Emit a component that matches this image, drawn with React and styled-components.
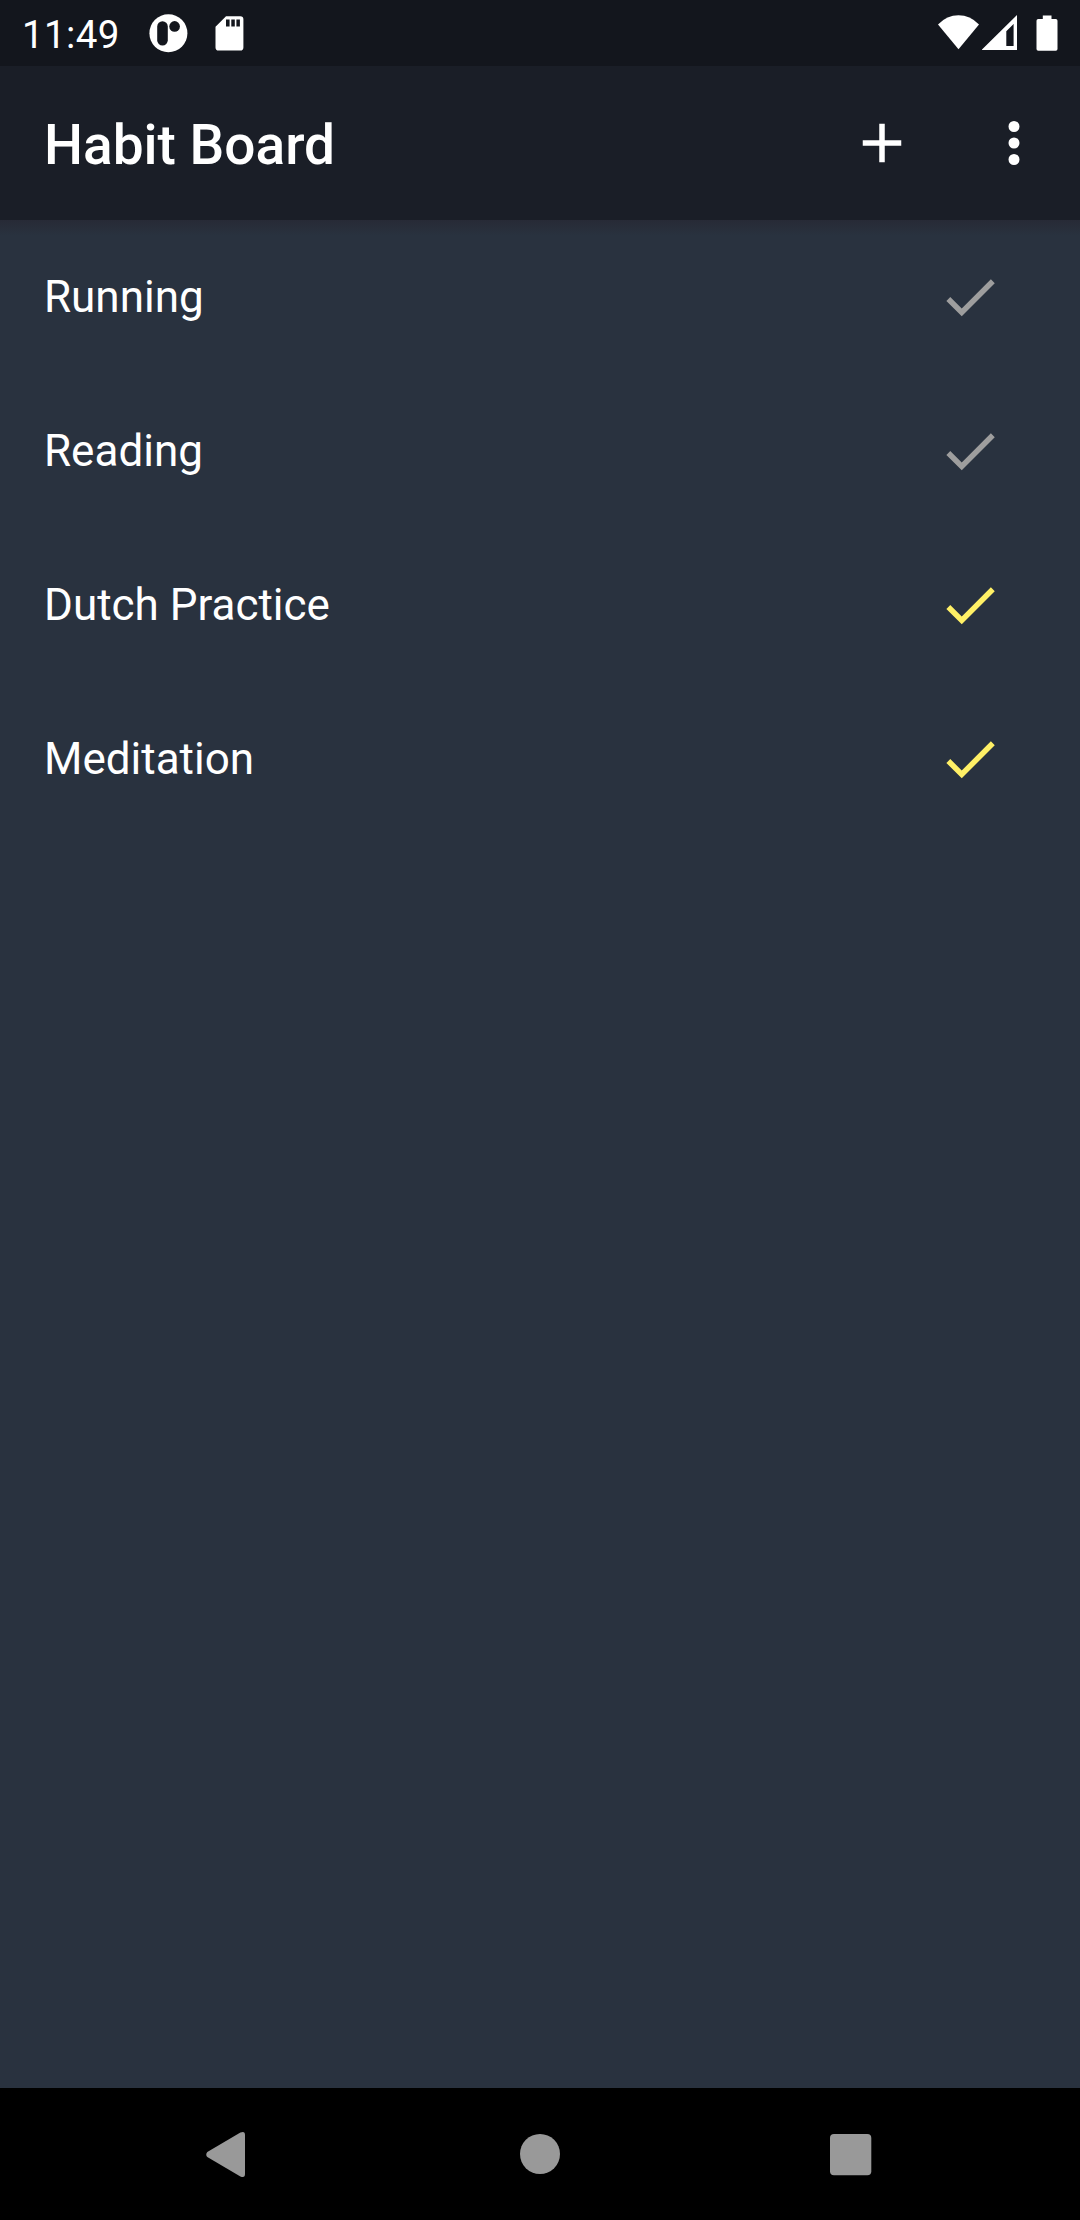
import React from "react";
import styled, { createGlobalStyle } from "styled-components";

const GlobalStyle = createGlobalStyle`
  * { box-sizing: border-box; }
  body { margin: 0; background: #29323f; }
  svg { display: block; flex: none; }
`;

const Screen = styled.div`
  display: flex;
  flex-direction: column;
  width: 1080px;
  height: 2220px;
  overflow: hidden;
  background: #29323f;
  color: #fff;
  font-family: Roboto, "Liberation Sans", sans-serif;
`;

const StatusBar = styled.header`
  display: flex;
  justify-content: space-between;
  flex: none;
  height: 66px;
  padding: 0 22px;
  background: #13161d;
`;

const StatusGroup = styled.div`
  display: flex;
  align-items: center;
  gap: ${(p) => p.$gap}px;
`;

const Clock = styled.time`
  width: 102px;
  padding-top: 4px;
  font-size: 38.5px;
  letter-spacing: 0.4px;
  line-height: 46px;
  white-space: nowrap;
`;

const AppBar = styled.div`
  display: flex;
  align-items: center;
  flex: none;
  height: 154px;
  padding: 0 33px 0 44px;
  background: #1a1e27;
`;

const Title = styled.h1`
  flex: 1;
  margin: 0;
  padding-top: 4px;
  font-size: 55px;
  font-weight: 500;
  line-height: 66px;
`;

const Actions = styled.div`
  display: flex;
  gap: 66px;
`;

const IconButton = styled.button`
  width: 66px;
  height: 66px;
  padding: 0;
  border: 0;
  background: none;
  color: ${(p) => p.$color || "#fff"};
`;

const Shade = styled.div`
  flex: none;
  height: 16px;
  margin-bottom: -16px;
  background: linear-gradient(#272a36, #29323f);
`;

const HabitList = styled.ul`
  flex: 1;
  margin: 0;
  padding: 0;
  list-style: none;
`;

const HabitRow = styled.li`
  display: flex;
  align-items: center;
  justify-content: space-between;
  height: 154px;
  padding: 0 77px 0 44px;
`;

const HabitName = styled.span`
  font-size: 44px;
  line-height: 52px;
`;

const NavBar = styled.nav`
  display: flex;
  align-items: center;
  justify-content: center;
  gap: 245px;
  flex: none;
  height: 132px;
  background: #000;
`;

const NavButton = styled.button`
  width: 66px;
  height: 66px;
  padding: 0;
  border: 0;
  background: none;
  color: #999;
`;

const MaterialIcon = ({ d }) => (
  <svg width="66" height="66" viewBox="0 0 24 24" fill="currentColor">
    <path d={d} />
  </svg>
);

const PLUS = "M19 13h-6v6h-2v-6H5v-2h6V5h2v6h6z";
const MORE =
  "M12 8a2 2 0 1 0 0-4 2 2 0 0 0 0 4zm0 2a2 2 0 1 0 0 4 2 2 0 0 0 0-4zm0 6a2 2 0 1 0 0 4 2 2 0 0 0 0-4z";
const CHECK = "M9 16.17L4.83 12l-1.42 1.41L9 19 21 7l-1.41-1.41z";

const AppBadge = () => (
  <svg width="44" height="66" viewBox="146 0 44 66">
    <circle cx="168.4" cy="33.2" r="19" fill="#fff" />
    <rect x="157.2" y="21.2" width="10.6" height="24.3" rx="5.3" fill="#13161d" />
    <circle cx="174.6" cy="26.4" r="5.3" fill="#13161d" />
  </svg>
);

const SdCard = () => (
  <svg width="34" height="66" viewBox="212 0 34 66">
    <path
      fill="#fff"
      fillRule="evenodd"
      d="M226 16.2H240.3Q243.4 16.2 243.4 19.3V47.5Q243.4 50.6 240.3 50.6H218.6Q215.5 50.6 215.5 47.5V26.7ZM226 19.6V26.6H229.6V19.6ZM231.3 19.6V26.6H234.8V19.6ZM236.4 19.6V26.6H239.9V19.6Z"
    />
  </svg>
);

const Wifi = () => (
  <svg width="42" height="66" viewBox="938 0 42 66">
    <path fill="#fff" d="M958.5 49.3L938 24.4Q947 15.3 958.5 15.3T979 24.4Z" />
  </svg>
);

const Signal = () => (
  <svg width="36" height="66" viewBox="982 0 36 66">
    <path
      fill="#fff"
      fillRule="evenodd"
      d="M982 50V49.6L1017 15V50ZM1006.3 31.2V46H1013.6V24Z"
    />
  </svg>
);

const Battery = () => (
  <svg width="22" height="66" viewBox="1036.5 0 22 66">
    <path
      fill="#fff"
      d="M1043.3 15.4H1052V19H1056.3Q1058 19 1058 20.8V48.9Q1058 50.7 1056.3 50.7H1038.8Q1037 50.7 1037 48.9V20.8Q1037 19 1038.8 19H1043.3Z"
    />
  </svg>
);

const SystemIcons = styled(StatusGroup)`
  & > :last-child { margin-left: 16.5px; }
`;

const habits = [
  { name: "Running", done: false },
  { name: "Reading", done: false },
  { name: "Dutch Practice", done: true },
  { name: "Meditation", done: true },
];

export default function App() {
  return (
    <Screen>
      <GlobalStyle />
      <StatusBar>
        <StatusGroup $gap={22}>
          <Clock>11:49</Clock>
          <AppBadge />
          <SdCard />
        </StatusGroup>
        <SystemIcons $gap={2}>
          <Wifi />
          <Signal />
          <Battery />
        </SystemIcons>
      </StatusBar>
      <AppBar>
        <Title>Habit Board</Title>
        <Actions>
          <IconButton aria-label="Add habit">
            <MaterialIcon d={PLUS} />
          </IconButton>
          <IconButton aria-label="More options">
            <MaterialIcon d={MORE} />
          </IconButton>
        </Actions>
      </AppBar>
      <Shade />
      <HabitList>
        {habits.map((habit) => (
          <HabitRow key={habit.name}>
            <HabitName>{habit.name}</HabitName>
            <IconButton $color={habit.done ? "#fff066" : "#9e9e9e"} aria-label={habit.name}>
              <MaterialIcon d={CHECK} />
            </IconButton>
          </HabitRow>
        ))}
      </HabitList>
      <NavBar>
        <NavButton aria-label="Back">
          <svg width="66" height="66" viewBox="196 2121 66 66" fill="currentColor">
            <path d="M207.3 2151.9L240.4 2132.6Q245 2130.7 245 2135V2174Q245 2178.3 240.4 2176.4L207.3 2157.1Q205.2 2154.5 207.3 2151.9Z" />
          </svg>
        </NavButton>
        <NavButton aria-label="Home">
          <svg width="66" height="66" viewBox="0 0 66 66" fill="currentColor">
            <circle cx="33" cy="33" r="20" />
          </svg>
        </NavButton>
        <NavButton aria-label="Overview">
          <svg width="66" height="66" viewBox="818 2121 66 66" fill="currentColor">
            <rect x="830" y="2134" width="41.3" height="41.3" rx="4" />
          </svg>
        </NavButton>
      </NavBar>
    </Screen>
  );
}
